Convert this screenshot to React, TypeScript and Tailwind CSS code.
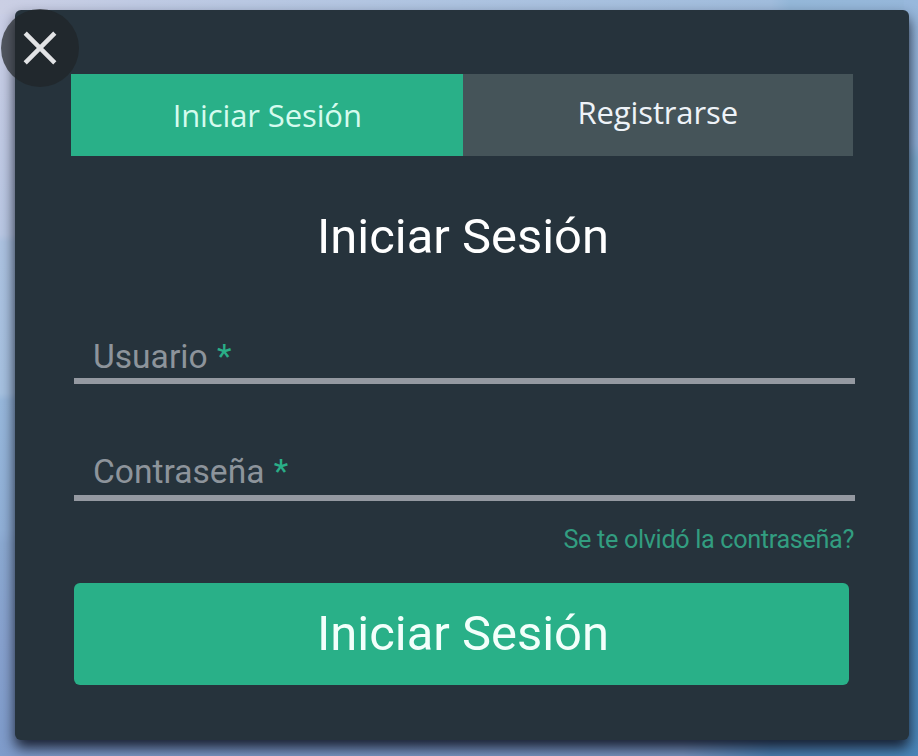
type FieldProps = { label: string; lineHeight: string };

const Field = ({ label, lineHeight }: FieldProps) => (
  <label className={`flex h-[46px] items-start border-b-[6px] border-[#9499a1] pl-[19px] font-[Roboto,sans-serif] text-[33.6px] whitespace-pre text-[#8d949b] ${lineHeight}`}>
    <span>{label} </span>
    <span className="pl-px text-[#2aae87]">*</span>
  </label>
);

export default function App() {
  return (
    <div className="relative h-[756px] w-[918px] overflow-hidden bg-[#a9bfde] pt-[10px] pl-[14.5px]">
      <svg className="absolute inset-0" width="918" height="756">
        <defs>
          <linearGradient id="left" x1="0" x2="0" y1="0" y2="1">
            <stop offset="0" stopColor="#cbcfe6" />
            <stop offset="0.31" stopColor="#b9c7e3" />
            <stop offset="0.32" stopColor="#adc3e1" />
            <stop offset="0.52" stopColor="#a6c1e0" />
            <stop offset="0.53" stopColor="#98b8dc" />
            <stop offset="0.7" stopColor="#91b0d7" />
            <stop offset="0.72" stopColor="#8caad2" />
            <stop offset="0.85" stopColor="#88a2cf" />
            <stop offset="1" stopColor="#7f9ccb" />
          </linearGradient>
          <linearGradient id="top" x1="0" x2="1">
            <stop offset="0" stopColor="#cbcfe4" />
            <stop offset="0.15" stopColor="#bfcae3" />
            <stop offset="0.5" stopColor="#adc3e0" />
            <stop offset="0.84" stopColor="#a0bcdc" />
            <stop offset="0.86" stopColor="#94b7d8" />
            <stop offset="1" stopColor="#96b7da" />
          </linearGradient>
          <linearGradient id="side" x1="0" x2="0" y1="0" y2="1">
            <stop offset="0" stopColor="#98b8dc" />
            <stop offset="0.19" stopColor="#91b2da" />
            <stop offset="0.21" stopColor="#7faed2" />
            <stop offset="0.5" stopColor="#66a2cd" />
            <stop offset="0.8" stopColor="#4f8ec0" />
            <stop offset="1" stopColor="#4a86b9" />
          </linearGradient>
          <linearGradient id="base" x1="0" x2="1">
            <stop offset="0" stopColor="#7f9ccb" />
            <stop offset="0.75" stopColor="#7894c0" />
            <stop offset="0.85" stopColor="#4a7fb1" />
            <stop offset="1" stopColor="#4a86b9" />
          </linearGradient>
        </defs>
        <rect width="20" height="756" fill="url(#left)" />
        <rect width="918" height="14" fill="url(#top)" />
        <rect x="904" width="14" height="756" fill="url(#side)" />
        <rect x="20" y="730" width="884" height="26" fill="url(#base)" />
      </svg>
      <main className="relative h-[730px] w-[894px] rounded-[6px] bg-[#26333c] pt-[64px] pl-[56.5px] shadow-[0_8px_14px_rgba(20,26,42,0.95)]">
        <nav className="flex h-[82px] w-[782px] font-['Open_Sans',sans-serif] text-[31px] tracking-[-0.12px]">
          <button className="flex flex-1 items-center justify-center bg-[#29b088] pt-px pl-px text-[#d5fbee]">Iniciar Sesión</button>
          <button className="flex flex-1 items-center justify-center bg-[#455459] pb-[5px] text-[#eef3f8]">Registrarse</button>
        </nav>
        <h1 className="mt-[52px] h-[58px] w-[784px] text-center font-[Roboto,sans-serif] text-[48.9px] leading-[58px] text-white">Iniciar Sesión</h1>
        <form className="ml-[3px] w-[781px] pt-[72px]">
          <Field label="Usuario" lineHeight="leading-[38px]" />
          <div className="h-[71px]" />
          <Field label="Contraseña" lineHeight="leading-[33px]" />
          <a className="mt-[24px] block h-[30px] pr-px text-right font-[Roboto,sans-serif] text-[25.2px] leading-[30px] tracking-[-0.33px] text-[#329d80]">Se te olvidó la contraseña?</a>
          <button type="button" className="mt-[28px] flex h-[102px] w-[775px] items-center justify-center rounded-[6px] bg-[#29b088] pl-[3px] font-[Roboto,sans-serif] text-[48.9px] text-[#f2fffb]">Iniciar Sesión</button>
        </form>
      </main>
      <button className="absolute top-[9px] left-[1px] flex size-[78px] items-center justify-center rounded-full bg-[#202327]/70" aria-label="Cerrar">
        <svg width="34" height="34" viewBox="0 0 34 34" fill="none" stroke="#e2e3e5" strokeWidth="4.5">
          <path d="M2.2 2.2 31.8 31.8M31.8 2.2 2.2 31.8" />
        </svg>
      </button>
    </div>
  );
}
